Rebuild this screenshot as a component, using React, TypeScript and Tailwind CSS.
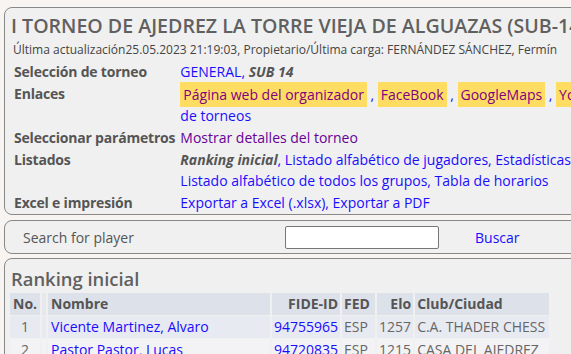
import React from 'react';

const blue = 'text-[#1a0dff]';

function Label({ children }: { children: React.ReactNode }) {
  return (
    <td className="whitespace-nowrap pr-[1px] align-top font-bold tracking-[-0.2px] text-[#555]">{children}</td>
  );
}

function Hl({ children }: { children: React.ReactNode }) {
  return <span className="bg-[#ffdd63] px-[3px] py-[3px] text-[#800080]">{children}</span>;
}

const players = [
  { no: 1, name: 'Vicente Martinez, Alvaro', fide: '94755965', fed: 'ESP', elo: 1257, club: 'C.A. THADER CHESS' },
  { no: 2, name: 'Pastor Pastor, Lucas', fide: '94720835', fed: 'ESP', elo: 1215, club: 'CASA DEL AJEDREZ' },
];

export default function App() {
  return (
    <div
      className="h-[354px] w-[571px] overflow-hidden bg-[#f8f4f2] pt-[7px] pl-1 text-[14px] text-[#333]"
      style={{ fontFamily: '"Open Sans", "Noto Sans", sans-serif' }}
    >
      <div className="w-[720px] rounded-[8px] border border-[#888] bg-[#f0f0f0] px-[6px]">
        <h1 className="whitespace-nowrap pt-[4px] text-[19.6px] leading-[28px] font-semibold text-[#606060]">
          I TORNEO DE AJEDREZ LA TORRE VIEJA DE ALGUAZAS (SUB-14)
        </h1>
        <div className="mt-[2px] ml-[2px] whitespace-nowrap text-[12px] leading-[16px] text-[#444]">
          Última actualización25.05.2023 21:19:03, Propietario/Última carga: FERNÁNDEZ SÁNCHEZ, Fermín
        </div>
        <table className="mt-[2px] ml-[2px] border-separate border-spacing-[1px] leading-[21px]">
          <tbody>
            <tr>
              <Label>Selección de torneo</Label>
              <td className={`pl-[3px] ${blue}`}>
                GENERAL, <b className="italic text-[#555]">SUB 14</b>
              </td>
            </tr>
            <tr>
              <Label>Enlaces</Label>
              <td className={`pl-[3px] pt-[1px] whitespace-nowrap ${blue}`}>
                <Hl>Página web del organizador</Hl> , <Hl>FaceBook</Hl> , <Hl>GoogleMaps</Hl> , <Hl>YouTube</Hl> ,{' '}
                <br />
                de torneos
              </td>
            </tr>
            <tr>
              <Label>Seleccionar parámetros</Label>
              <td className="pl-[3px] text-[#660099]">Mostrar detalles del torneo</td>
            </tr>
            <tr>
              <Label>Listados</Label>
              <td className={`pl-[3px] whitespace-nowrap ${blue}`}>
                <b className="italic text-[#555]">Ranking inicial</b>, Listado alfabético de jugadores, Estadísticas
                <br />
                Listado alfabético de todos los grupos, Tabla de horarios
              </td>
            </tr>
            <tr>
              <Label>Excel e impresión</Label>
              <td className={`pl-[3px] ${blue}`}>Exportar a Excel (.xlsx), Exportar a PDF</td>
            </tr>
          </tbody>
        </table>
      </div>

      <div className="mt-[5px] flex h-[34px] w-[720px] items-center rounded-[8px] border border-[#888] bg-[#f0f0f0]">
        <span className="w-[280px] pl-[18px] text-[#555]">Search for player</span>
        <div className="h-[23px] w-[154px] rounded-[2px] border border-[#777] bg-white" />
        <span className={`ml-[36px] ${blue}`}>Buscar</span>
      </div>

      <div className="mt-[4px] w-[720px] rounded-[8px] border border-[#888] bg-[#f0f0f0] px-[3px]">
        <h2 className="pl-[3px] pt-[8px] text-[18.4px] leading-[24px] font-semibold text-[#606060]">Ranking inicial</h2>
        <table className="mt-[1px] table-fixed border-separate border-spacing-x-[2px] border-spacing-y-[1px] leading-[22px]">
          <thead>
            <tr className="bg-[#dde1ea] font-bold text-[#555]">
              <th className="w-[30px] px-[3px] text-left">No.</th>
              <th className="w-[4px] bg-[#e6e8ee] p-0"></th>
              <th className="w-[222px] px-[3px] text-left">Nombre</th>
              <th className="w-[67px] px-[2px] text-right">FIDE-ID</th>
              <th className="w-[33px] px-[2px] text-left">FED</th>
              <th className="w-[35px] px-[2px] text-right">Elo</th>
              <th className="w-[134px] px-[2px] text-left">Club/Ciudad</th>
            </tr>
          </thead>
          <tbody>
            {players.map((p, i) => (
              <tr key={p.no} className={i % 2 === 0 ? 'bg-[#e8eaf1] text-[#666]' : 'bg-[#f3f3f5] text-[#666]'}>
                <td className="px-[3px] text-center">{p.no}</td>
                <td className="p-0"></td>
                <td className={`px-[3px] whitespace-nowrap ${blue}`}>{p.name}</td>
                <td className={`px-[2px] text-right ${blue}`}>{p.fide}</td>
                <td className="px-[2px]">{p.fed}</td>
                <td className="px-[2px] text-right">{p.elo}</td>
                <td className="px-[2px] whitespace-nowrap">{p.club}</td>
              </tr>
            ))}
          </tbody>
        </table>
      </div>
    </div>
  );
}
